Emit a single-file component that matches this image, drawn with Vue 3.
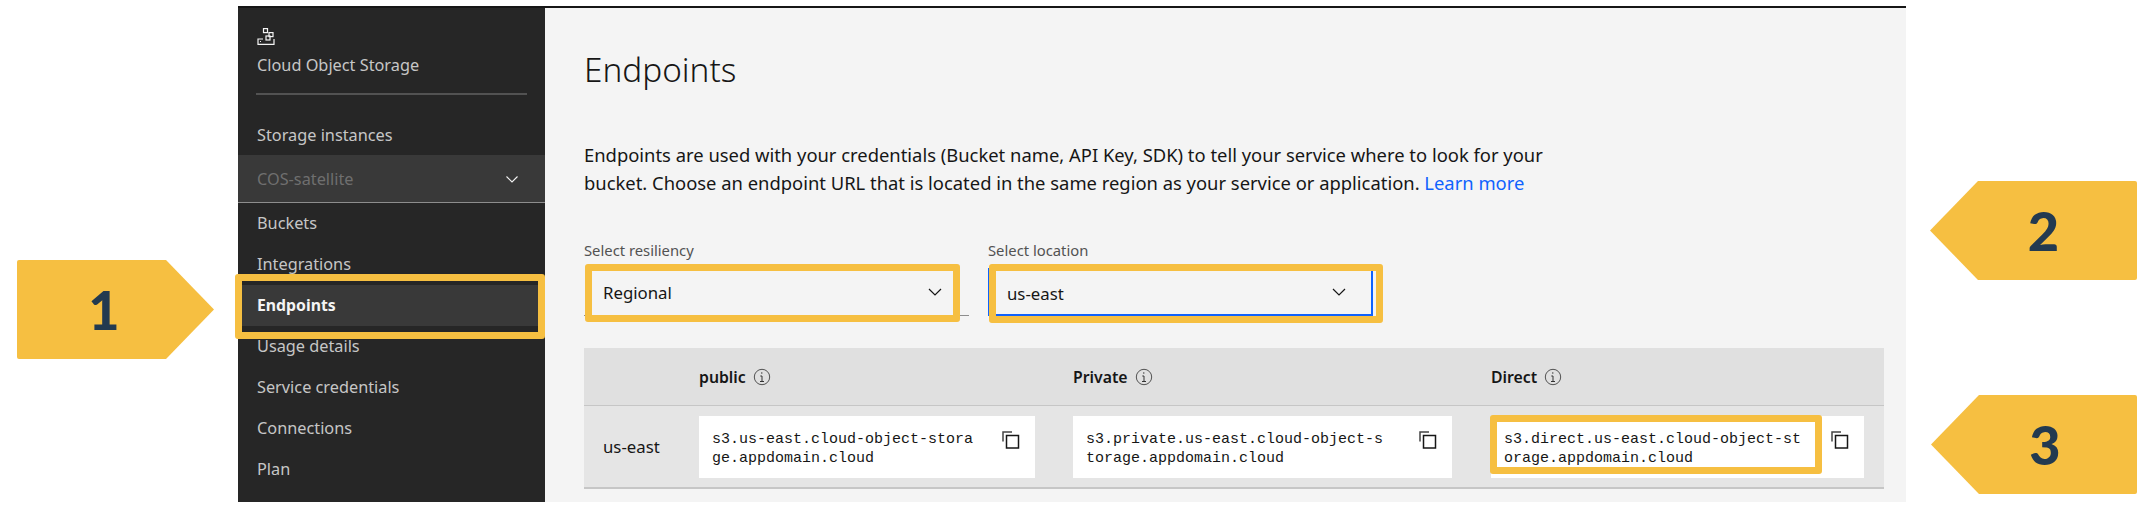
<script setup>
const navBottom = ['Integrations', 'Endpoints', 'Usage details', 'Service credentials', 'Connections', 'Plan']
const columns = [
  { name: 'public', url: 's3.us-east.cloud-object-storage.appdomain.cloud' },
  { name: 'Private', url: 's3.private.us-east.cloud-object-storage.appdomain.cloud' },
  { name: 'Direct', url: 's3.direct.us-east.cloud-object-storage.appdomain.cloud' },
]
const badges = [
  { n: 1, cls: 'b1' },
  { n: 2, cls: 'b2' },
  { n: 3, cls: 'b3' },
]
</script>

<template>
  <div class="page">
    <div class="shot">
      <aside class="side">
        <svg class="logo" width="18" height="18" viewBox="0 0 18 18" fill="none" stroke="#f4f4f4" stroke-width="1.2">
          <rect x="6.5" y="0.6" width="4" height="4" />
          <rect x="12" y="4.6" width="4" height="4" />
          <rect x="9" y="8" width="4" height="4" />
          <path d="M6 11H1v5.4h16V11" />
          <path d="M3 13.5h1" />
        </svg>
        <div class="brand">Cloud Object Storage</div>
        <div class="rule"></div>
        <div class="item first">Storage instances</div>
        <div class="inst">
          <span>COS-satellite</span>
          <svg width="14" height="14" viewBox="0 0 14 14" fill="none" stroke="#f4f4f4" stroke-width="1.1"><path d="M1.5 4.5 7 10l5.500-5.500" /></svg>
        </div>
        <div class="item">Buckets</div>
        <div
          v-for="n in navBottom"
          :key="n"
          class="item"
          :class="{ active: n === 'Endpoints' }"
        >{{ n }}</div>
      </aside>

      <main class="main">
        <h1 class="title">Endpoints</h1>
        <p class="intro">
          Endpoints are used with your credentials (Bucket name, API Key, SDK) to tell your service where to look for your<br />
          bucket. Choose an endpoint URL that is located in the same region as your service or application. <a class="link">Learn more</a>
        </p>

        <div class="filters">
          <div class="field">
            <label>Select resiliency</label>
            <div class="select plain">
              <span>Regional</span>
              <svg width="16" height="16" viewBox="0 0 16 16" fill="none" stroke="#161616" stroke-width="1.2"><path d="M2 5l6 6 6-6" /></svg>
              <i class="mark"></i>
            </div>
          </div>
          <div class="field">
            <label>Select location</label>
            <div class="select focus">
              <span>us-east</span>
              <svg width="16" height="16" viewBox="0 0 16 16" fill="none" stroke="#161616" stroke-width="1.2"><path d="M2 5l6 6 6-6" /></svg>
              <i class="mark"></i>
            </div>
          </div>
        </div>

        <div class="table">
          <div class="head">
            <div></div>
            <div v-for="c in columns" :key="c.name" class="th">
              <b>{{ c.name }}</b>
              <svg width="18" height="18" viewBox="0 0 18 18" fill="none" stroke="#525252" stroke-width="1">
                <circle cx="9" cy="9" r="7.700" />
                <path d="M7 13.500h4M9 13.500V8H7.300" stroke="#333" />
                <circle cx="8.800" cy="5" r="0.700" fill="#333" stroke="none" />
              </svg>
            </div>
          </div>
          <div class="row">
            <div class="region">us-east</div>
            <div v-for="c in columns" :key="c.name" class="cell" :class="c.name">
              <code>{{ c.url }}</code>
              <svg class="copy" width="20" height="20" viewBox="0 0 20 20" fill="none" stroke="#161616" stroke-width="1.500">
                <rect x="5.500" y="5.500" width="12" height="12.500" />
                <path d="M2 11.500V2h9" stroke="#444" />
              </svg>
              <i v-if="c.name === 'Direct'" class="mark"></i>
            </div>
          </div>
        </div>
      </main>
    </div>

    <div v-for="b in badges" :key="b.n" class="badge" :class="b.cls">{{ b.n }}</div>
  </div>
</template>

<style>
html, body { margin: 0; background: #fff; }
</style>

<style scoped>
.page {
  position: relative;
  width: 2148px;
  height: 514px;
  overflow: hidden;
  background: #fff;
  font-family: "Noto Sans", "Open Sans", sans-serif;
  color: #161616;
}
.shot {
  position: absolute;
  left: 238px;
  top: 6px;
  width: 1668px;
  height: 496px;
  display: flex;
  border-top: 2px solid #161616;
  box-sizing: border-box;
}
.side {
  width: 307px;
  flex: none;
  background: #262626;
  color: #c6c6c6;
  display: flex;
  flex-direction: column;
  font-size: 16.300px;
}
.logo { margin: 20px 0 0 19px; flex: none; }
.brand { margin: 8px 0 0 19px; height: 22px; line-height: 22px; }
.rule { height: 2px; background: #525252; margin: 17px 18px 0 18px; flex: none; }
.item {
  height: 41px;
  line-height: 41px;
  padding-left: 19px;
  flex: none;
  position: relative;
}
.first { margin-top: 20px; margin-bottom: -1px; }
.inst {
  height: 48px;
  flex: none;
  box-sizing: border-box;
  background: #393939;
  border-bottom: 1px solid #8d8d8d;
  color: #6f6f6f;
  padding: 0 26px 0 19px;
  display: flex;
  align-items: center;
  justify-content: space-between;
}
.active {
  background: #393939;
  color: #f4f4f4;
  font-weight: 700;
  font-size: 15.800px;
}
.active::after {
  content: "";
  position: absolute;
  left: -3px;
  right: 0;
  top: -11px;
  bottom: -13px;
  border: 7px solid #f6bf41;
  border-radius: 3px;
}
.main {
  flex: 1;
  background: #f4f4f4;
  padding: 0 22px 0 39px;
  min-width: 0;
}
.title {
  margin: 0;
  padding-top: 43px;
  font-size: 33.300px;
  line-height: 36px;
  font-weight: 300;
}
.intro {
  margin: 54px 0 0;
  font-size: 18.400px;
  line-height: 28px;
  white-space: nowrap;
}
.link { color: #0f62fe; }
.filters { display: flex; gap: 19px; margin-top: 43px; }
.field { width: 385px; }
.field label {
  display: block;
  height: 20px;
  line-height: 20px;
  font-size: 14.800px;
  color: #525252;
  margin-bottom: 8px;
}
.select {
  position: relative;
  height: 48px;
  display: flex;
  align-items: center;
  justify-content: space-between;
  font-size: 16.800px;
  box-sizing: border-box;
  padding: 2px 26px 0 19px;
}
.select svg { margin-top: -2px; }
.plain { border-bottom: 1px solid #8d8d8d; }
.focus { box-shadow: inset 0 0 0 2px #0f62fe; }
.mark {
  position: absolute;
  border: 7px solid #f6bf41;
  border-radius: 3px;
  pointer-events: none;
}
.plain .mark { left: 1px; right: 9px; top: -4px; bottom: -7px; }
.focus .mark { left: 1px; right: -10px; top: -4px; bottom: -7px; }
.table { margin-top: 32px; }
.head, .row {
  display: grid;
  grid-template-columns: 115px 374px 418px 393px;
}
.head {
  height: 58px;
  background: #e0e0e0;
  border-bottom: 1px solid #c6c6c6;
  box-sizing: border-box;
}
.th { display: flex; align-items: center; gap: 7px; font-size: 15.800px; }
.th b { font-weight: 600; }
.row {
  height: 83px;
  box-sizing: border-box;
  background: #e5e5e5;
  border-bottom: 2px solid #c6c6c6;
  padding-top: 10px;
}
.region { font-size: 16.800px; padding-left: 19px; line-height: 62px; }
.cell {
  position: relative;
  height: 62px;
  background: #fff;
  display: flex;
  padding: 14px 14px 0 13px;
  box-sizing: border-box;
}
.public { margin-right: 38px; }
.Private { margin-right: 39px; }
.Direct { margin-right: 20px; }
.cell code {
  font-family: "Liberation Mono", "DejaVu Sans Mono", monospace;
  font-size: 15px;
  line-height: 19px;
  word-break: break-all;
  width: 300px;
  flex: none;
  color: #161616;
}
.public code { width: 265px; }
.copy { margin-left: auto; margin-top: 0; }
.Direct .mark { left: -1px; top: -1px; width: 318px; height: 45px; }
.badge {
  position: absolute;
  height: 99px;
  background: #f6bf41;
  color: #233a50;
  font-family: Lato, "Open Sans", sans-serif;
  font-weight: 900;
  font-size: 54px;
  line-height: 99px;
  text-align: center;
  border-radius: 2px;
}
.b1 {
  left: 17px;
  top: 260px;
  width: 197px;
  clip-path: polygon(0 0, 149px 0, 100% 50%, 149px 100%, 0 100%);
  text-indent: -23px;
}
.b2, .b3 {
  width: 207px;
  clip-path: polygon(48px 0, 100% 0, 100% 100%, 48px 100%, 0 50%);
}
.b2 { left: 1930px; top: 181px; text-indent: 20px; }
.b3 { left: 1931px; top: 395px; width: 206px; text-indent: 22px; }
</style>
